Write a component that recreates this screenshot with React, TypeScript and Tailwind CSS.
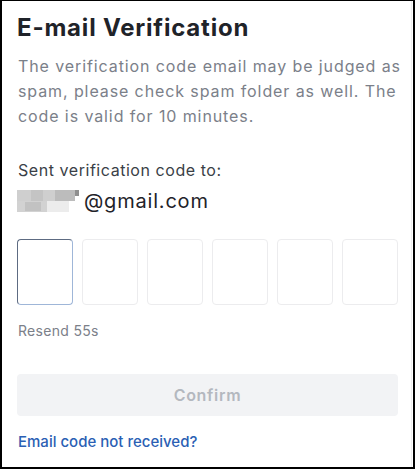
import React from "react";

function Redacted() {
  return (
    <svg width="64" height="22" viewBox="0 0 64 22" className="shrink-0 mr-[3px]">
      <rect x="0" y="0" width="58" height="11" fill="#cfcfcf" />
      <rect x="14" y="0" width="12" height="11" fill="#c4c4c4" />
      <rect x="38" y="0" width="20" height="11" fill="#bcbcbc" />
      <rect x="0" y="11" width="30" height="11" fill="#d2d2d2" />
      <rect x="8" y="12" width="16" height="9" fill="#c2c2c2" />
      <rect x="30" y="11" width="22" height="11" fill="#ececec" />
      <rect x="58" y="0" width="4" height="6" fill="#8f8f8f" />
    </svg>
  );
}

export default function App() {
  const boxes = [0, 1, 2, 3, 4, 5];
  return (
    <div
      className="w-[415px] h-[469px] bg-white border-x-2 border-b-2 border-t border-black overflow-hidden"
      style={{ fontFamily: "Inter, 'Noto Sans', sans-serif" }}
    >
      <div className="h-full mr-[1px] border-r border-[#eeeeee] pl-[15px] pr-[8px] pt-[11px] flex flex-col">
        <h1 className="text-[24px] leading-[32px] font-bold text-[#1f2329] tracking-[0.8px]">
          E-mail Verification
        </h1>
        <p className="mt-[10px] text-[16px] leading-[25px] text-[#7b8089] pl-[1px] tracking-[0.9px]">
          The verification code email may be judged as spam, please check spam folder as well. The code is valid for 10 minutes.
        </p>
        <div className="mt-[29px] text-[16px] leading-[24px] text-[#3a3f47] pl-[1px] tracking-[0.55px]">
          Sent verification code to:
        </div>
        <div className="mt-[5px] flex items-center text-[20px] leading-[28px] text-[#1f2329] tracking-[0.8px]">
          <Redacted />
          <span>@gmail.com</span>
        </div>
        <div className="mt-[24px] flex gap-[9px] w-[381px]">
          {boxes.map((b) => (
            <div
              key={b}
              className={
                b === 0
                  ? "w-[56px] h-[66px] shrink-0 rounded-[4px] border border-[#5d6b82] border-r-[#9fb6d8] border-b-[#9fb6d8]"
                  : "w-[56px] h-[66px] shrink-0 rounded-[4px] border border-[#ececee]"
              }
            />
          ))}
        </div>
        <div className="mt-[16px] text-[14px] leading-[20px] text-[#7b8089] pl-[1px] tracking-[0.3px]">
          Resend 55s
        </div>
        <button className="mt-[33px] h-[42px] w-[381px] rounded-[4px] bg-[#f2f3f5] text-[16px] font-semibold text-[#b4b8bf] tracking-[0.7px]">
          Confirm
        </button>
        <div className="mt-[15px] text-[15px] leading-[22px] font-medium text-[#2b5fb4] pl-[1px]">
          Email code not received?
        </div>
      </div>
    </div>
  );
}
